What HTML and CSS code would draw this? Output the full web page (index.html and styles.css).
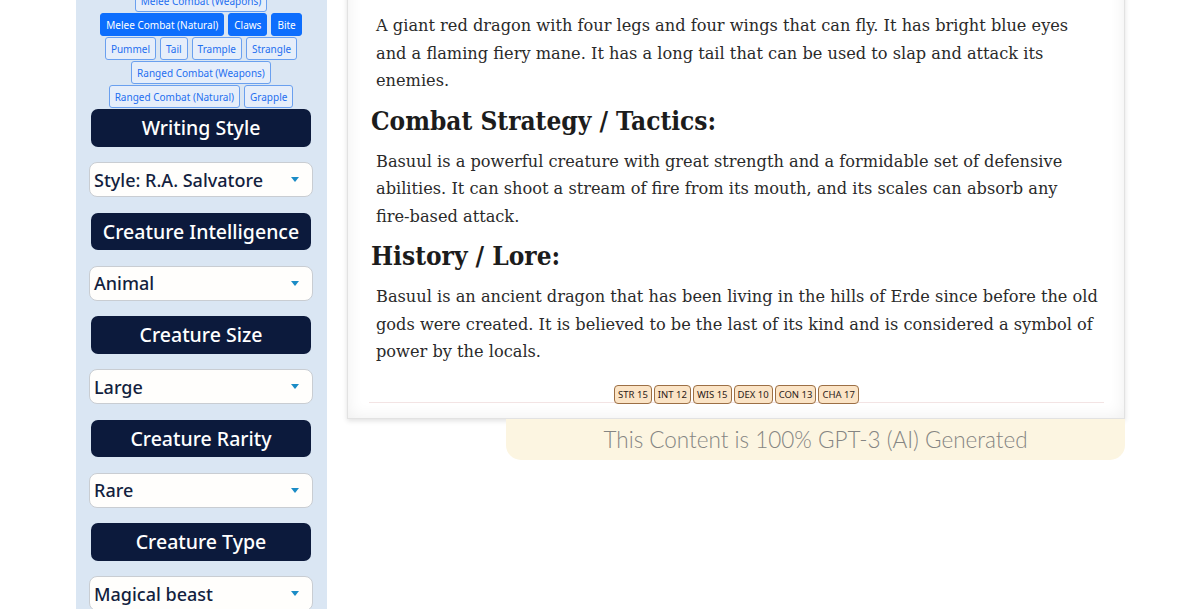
FILE: index.html
```html
<!DOCTYPE html>
<html lang="en">
<head>
<meta charset="utf-8">
<title>Creature Generator</title>
<link rel="stylesheet" href="styles.css">
</head>
<body>
<div class="page">
  <div class="gutter"></div>
  <aside class="sidebar">
    <div class="tags">
      <div class="tag-row"><span class="tag">Melee Combat (Weapons)</span></div>
      <div class="tag-row"><span class="tag on">Melee Combat (Natural)</span><span class="tag on">Claws</span><span class="tag on">Bite</span></div>
      <div class="tag-row"><span class="tag">Pummel</span><span class="tag">Tail</span><span class="tag">Trample</span><span class="tag">Strangle</span></div>
      <div class="tag-row"><span class="tag">Ranged Combat (Weapons)</span></div>
      <div class="tag-row"><span class="tag">Ranged Combat (Natural)</span><span class="tag">Grapple</span></div>
    </div>
    <div class="field-title">Writing Style</div>
    <div class="select"><span>Style: R.A. Salvatore</span><i class="caret"></i></div>
    <div class="field-title">Creature Intelligence</div>
    <div class="select"><span>Animal</span><i class="caret"></i></div>
    <div class="field-title">Creature Size</div>
    <div class="select"><span>Large</span><i class="caret"></i></div>
    <div class="field-title">Creature Rarity</div>
    <div class="select"><span>Rare</span><i class="caret"></i></div>
    <div class="field-title">Creature Type</div>
    <div class="select"><span>Magical beast</span><i class="caret"></i></div>
  </aside>
  <main class="main">
    <article class="card">
      <p>A giant red dragon with four legs and four wings that can fly. It has bright blue eyes<br>and a flaming fiery mane. It has a long tail that can be used to slap and attack its<br>enemies.</p>
      <h2>Combat Strategy / Tactics:</h2>
      <p>Basuul is a powerful creature with great strength and a formidable set of defensive<br>abilities. It can shoot a stream of fire from its mouth, and its scales can absorb any<br>fire-based attack.</p>
      <h2>History / Lore:</h2>
      <p>Basuul is an ancient dragon that has been living in the hills of Erde since before the old<br>gods were created. It is believed to be the last of its kind and is considered a symbol of<br>power by the locals.</p>
      <div class="stats">
        <span class="stat">STR 15</span><span class="stat">INT 12</span><span class="stat">WIS 15</span><span class="stat">DEX 10</span><span class="stat">CON 13</span><span class="stat">CHA 17</span>
      </div>
    </article>
    <div class="ai-note">This Content is 100% GPT-3 (AI) Generated</div>
  </main>
</div>
</body>
</html>
```
FILE: styles.css
```css
* { box-sizing: border-box; }
html, body { margin: 0; padding: 0; background: #ffffff; overflow: hidden; height: 609px; }
.page { display: flex; align-items: flex-start; height: 609px; }
.gutter { width: 76px; flex: none; }

.sidebar {
  width: 251px;
  flex: none;
  height: 609px;
  background: #dae6f3;
  padding: 0 14px 0 13px;
  font-family: "Noto Sans", "Open Sans", sans-serif;
  overflow: hidden;
}
.tags { margin-top: -11px; display: flex; flex-direction: column; gap: 1px; }
.tag-row { display: flex; justify-content: center; gap: 4px; height: 23px; }
.tag {
  display: inline-flex; align-items: center;
  height: 23px; padding: 0 5px;
  font-size: 10px; color: #1f6ff0;
  background: #e6eefa;
  border: 1px solid #6aa0ef; border-radius: 3px;
  white-space: nowrap;
}
.tag.on { background: #0d6efd; border-color: #0d6efd; color: #ffffff; }

.field-title {
  margin: 1px 2px 15.5px 2px;
  height: 37.5px;
  background: #0c1a3c;
  border-radius: 7px;
  color: #ffffff;
  font-size: 19.5px; font-weight: 500;
  display: flex; align-items: center; justify-content: center;
}
.select + .field-title { margin-top: 0; }
.select {
  height: 35px;
  background: #fffefc;
  border: 1px solid #c9cdd2;
  border-radius: 8px;
  display: flex; align-items: center; justify-content: space-between;
  padding: 0 13px 0 4px;
  color: #131f3f;
  font-size: 18px; font-weight: 500;
  margin-bottom: 15.5px;
}
.caret {
  width: 0; height: 0;
  border-left: 4.5px solid transparent;
  border-right: 4.5px solid transparent;
  border-top: 5px solid #1b8cc6;
}

.main { flex: 1; padding-left: 20px; }
.card {
  width: 778px;
  margin-top: -30px;
  padding: 41px 10px 15px 23px;
  background: #ffffff;
  border: 1px solid #e2e2e2;
  box-shadow: inset 0 0 16px rgba(0,0,0,0.07), 0 2px 5px rgba(0,0,0,0.12);
  font-family: "DejaVu Serif", serif;
  color: #222222;
}
.card p {
  margin: 0; padding-left: 5px;
  font-size: 16.2px; line-height: 27.5px;
  color: #2a2a2a;
  white-space: nowrap;
}
.card h2 {
  margin: 8px 0 9px 0;
  font-family: "DejaVu Serif Condensed", "DejaVu Serif", serif;
  font-size: 26px; line-height: 36px; font-weight: bold;
  color: #1c1c1c;
}
.stats {
  margin-top: 19px;
  display: flex; justify-content: center; gap: 2px;
  border-bottom: 1px solid #f3e4e4;
  margin-left: -2px; margin-right: 10px;
  height: 18px; overflow: visible;
}
.stat {
  height: 19px;
  display: inline-flex; align-items: center;
  padding: 0 3px;
  font-family: "Noto Sans", "Open Sans", sans-serif;
  font-size: 9.5px; color: #2b2016;
  background: #fbe4c6;
  border: 1px solid #9c6f45; border-radius: 4px;
}
.ai-note {
  width: 619px;
  margin-left: 159px;
  height: 41px;
  background: #fcf5e1;
  border-radius: 0 0 15px 15px;
  display: flex; align-items: center; justify-content: center;
  font-family: "Lato", "Open Sans", sans-serif;
  font-weight: 300;
  font-size: 22.5px;
  color: #858583;
}
```
